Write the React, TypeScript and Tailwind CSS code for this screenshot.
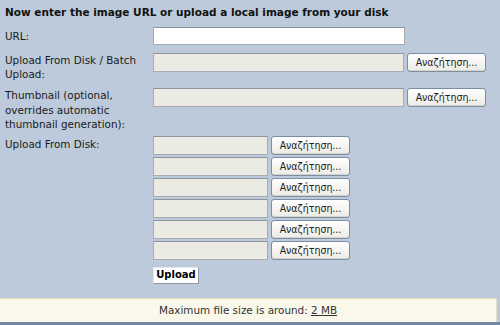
import React from "react";

const Browse = () => (
  <button
    type="button"
    className="h-[19px] w-[79px] shrink-0 rounded-[3px] border border-[#7b8ea3] bg-gradient-to-b from-[#ffffff] to-[#ecebe6] text-[10.5px] leading-none text-[#222] shadow-[inset_0_-1px_0_#d6d3c8]"
    style={{ fontFamily: '"DejaVu Sans Condensed", "DejaVu Sans", sans-serif' }}
  >
    Αναζήτηση...
  </button>
);

const FileInput = ({ w }: { w: string }) => (
  <div className="flex items-center gap-[3px]">
    <div className={`${w} h-[19px] border border-[#a7acb2] border-t-[#8e949b] bg-[#ecebe3]`} />
    <Browse />
  </div>
);

export default function App() {
  return (
    <div
      className="relative h-[325px] w-[500px] overflow-hidden bg-[#bccadb] text-[10.4px] text-[#1a1a1a]"
      style={{ fontFamily: '"DejaVu Sans", Verdana, sans-serif' }}
    >
      <div className="px-[5px] pt-[5px] text-[10.5px] font-bold leading-[14px] text-[#111]">
        Now enter the image URL or upload a local image from your disk
      </div>

      <div className="mt-[8px] flex items-center">
        <div className="w-[153px] shrink-0 pl-[5px] leading-[14px]">URL:</div>
        <div className="h-[18px] w-[252px] border border-[#a7acb2] border-t-[#8e949b] bg-white" />
      </div>

      <div className="mt-[8px] flex items-start">
        <div className="w-[153px] shrink-0 pl-[5px] leading-[14px]">
          Upload From Disk / Batch
          <br />
          Upload:
        </div>
        <FileInput w="w-[251px]" />
      </div>

      <div className="mt-[7px] flex items-start">
        <div className="w-[153px] shrink-0 pl-[5px] leading-[14.5px]">
          Thumbnail (optional,
          <br />
          overrides automatic
          <br />
          thumbnail generation):
        </div>
        <FileInput w="w-[251px]" />
      </div>

      <div className="mt-[4px] flex items-start">
        <div className="w-[153px] shrink-0 pl-[5px] pt-[1px] leading-[14px]">Upload From Disk:</div>
        <div className="flex flex-col gap-[2px]">
          <FileInput w="w-[115px]" />
          <FileInput w="w-[115px]" />
          <FileInput w="w-[115px]" />
          <FileInput w="w-[115px]" />
          <FileInput w="w-[115px]" />
          <FileInput w="w-[115px]" />
        </div>
      </div>

      <div className="mt-[7px] pl-[153px]">
        <button
          type="button"
          className="h-[17px] w-[46px] border border-[#e4e8ee] border-b-[#8d9aa8] border-r-[#8d9aa8] bg-white text-[10px] font-bold leading-none text-black"
        >
          Upload
        </button>
      </div>

      <div className="absolute bottom-[3px] left-0 flex h-[24px] w-[497px] items-center justify-center border-t border-r border-[#e2dfc6] bg-[#faf8ea] text-[10.4px] text-[#333]">
        <span>
          Maximum file size is around: <span className="underline">2 MB</span>
        </span>
      </div>
      <div className="absolute bottom-0 left-0 h-[3px] w-full bg-[#7288a0]" />
    </div>
  );
}
